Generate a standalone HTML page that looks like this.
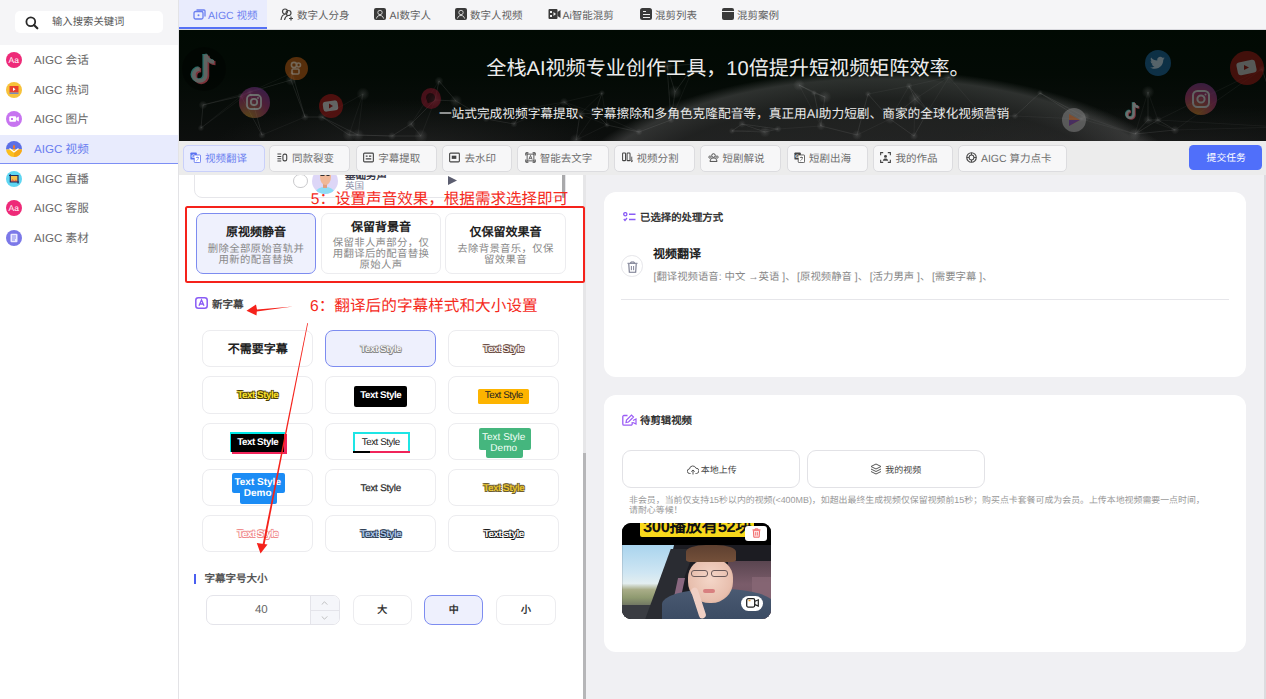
<!DOCTYPE html>
<html lang="zh-CN"><head><meta charset="utf-8">
<style>
*{box-sizing:border-box;margin:0;padding:0}
html,body{width:1266px;height:699px;overflow:hidden;background:#fff;font-family:"Liberation Sans",sans-serif;color:#333;text-rendering:geometricPrecision}
.a{position:absolute}
.nw{white-space:nowrap}
/* sidebar */
#side{left:0;top:0;width:178px;height:699px;background:#fff}
#side .srch{left:0;top:0;width:178px;height:45px;background:#f5f5f7}
#side .box{left:15px;top:11px;width:148px;height:22px;background:#fff;border-radius:5px}
.mi{left:0;width:178px;height:29px;font-size:11.6px;color:#6a6a6a}
.mi .ic{left:6.5px;top:6px;width:16px;height:16px;border-radius:50%}
.mi .t{left:34px;top:6.5px;line-height:17px}
#sideline{left:178px;top:0;width:1px;height:699px;background:#e3e3e6}
/* topnav */
#nav{left:179px;top:0;width:1087px;height:30px;background:#f5f5f7;border-bottom:1px solid #d9d9de}
.tab{top:1.8px;height:29px;font-size:10.5px;color:#606060;line-height:29px}
/* banner */
#banner{left:179px;top:30px;width:1087px;height:111px;background:#030a05;overflow:hidden}
/* toolbar */
#tool{left:179px;top:141px;width:1087px;height:34px;background:#ececec;z-index:2}
.tb{top:4.2px;height:26.6px;border:1px solid #dcdcdf;border-radius:5px;background:#f7f7f8;font-size:10.5px;color:#6e6e6e;line-height:26.5px}
/* left panel */
#lp{left:179px;top:174px;width:404px;height:525px;background:#fff;overflow:hidden}
#lscroll{left:583px;top:174px;width:3px;height:525px;background:#e6e6e8}
#lthumb{left:583px;top:453px;width:3px;height:246px;background:#b6b6b8}
/* right panel */
#rp{left:586px;top:174px;width:678px;height:525px;background:#f0f0f3}
#rscroll{left:1264px;top:174px;width:2px;height:525px;background:#dcdcdf}
.card{background:#fff;border-radius:12px}
.opt{border:1px solid #ececef;border-radius:7px;background:#fff}
.ot{left:0;width:100%;text-align:center;font-size:12px;line-height:16px;font-weight:bold;color:#222}
.od{left:0;width:100%;text-align:center;font-size:10.4px;line-height:10px;color:#888;letter-spacing:0.35px;margin-top:1.2px}
.od div{height:10.75px;white-space:nowrap}
.sc{width:111.4px;height:37.2px;border:1px solid #ececef;border-radius:8px;background:#fff;overflow:hidden}
.ts{text-align:center;font-size:9.8px;line-height:15px;font-weight:bold;letter-spacing:-0.45px}
.szb{top:421.3px;width:59.3px;height:29.6px;border:1px solid #ececef;border-radius:8px;background:#fff;text-align:center;font-size:10px;line-height:30.5px;font-weight:bold;color:#333}
.upb{top:55.2px;width:178px;height:37.6px;border:1px solid #e2e2e6;border-radius:9px;background:#fff}
</style></head><body>

<!-- SIDEBAR -->
<div id="side" class="a">
  <div class="srch a"></div>
  <div class="box a"></div>
  <svg class="a" style="left:25px;top:16px" width="14" height="14" viewBox="0 0 14 14"><circle cx="5.8" cy="5.8" r="4.4" fill="none" stroke="#2a2a2a" stroke-width="1.8"/><path d="M9 9 L12.3 12.3" stroke="#2a2a2a" stroke-width="2.2" stroke-linecap="round"/></svg>
  <div class="a nw" style="left:52px;top:16.2px;font-size:10.35px;line-height:14px;color:#555">输入搜索关键词</div>
  <div class="a" style="left:0;top:134.5px;width:178px;height:29.8px;background:#e8ebfd;border-bottom:1.5px solid #7d8ff5"></div>
  <div class="mi a" style="top:45px"><svg class="a" style="left:6.3px;top:6.8px" width="16" height="16" viewBox="0 0 16 16"><circle cx="8" cy="8" r="8" fill="#ee2a78"/><text x="2.6" y="11.3" font-size="8.5" fill="#fff" font-family="Liberation Sans">Aa</text></svg><div class="t a nw">AIGC 会话</div></div>
  <div class="mi a" style="top:75px"><svg class="a" style="left:6.3px;top:6.8px" width="16" height="16" viewBox="0 0 16 16"><circle cx="8" cy="8" r="8" fill="#f7c23a"/><rect x="3.5" y="4" width="9" height="6.5" fill="#e8402f"/><path d="M7 5.5 L9.5 7.2 L7 8.9Z" fill="#fff"/><rect x="3.5" y="10.5" width="9" height="1.5" fill="#7a8ab8"/></svg><div class="t a nw">AIGC 热词</div></div>
  <div class="mi a" style="top:104px"><svg class="a" style="left:6.3px;top:6.8px" width="16" height="16" viewBox="0 0 16 16"><circle cx="8" cy="8" r="8" fill="#c774f0"/><rect x="3.3" y="5.2" width="6.8" height="5.6" rx="1" fill="#fff"/><path d="M10.3 7 L12.8 5.5 V10.5 L10.3 9Z" fill="#fff"/><rect x="5" y="7" width="2" height="2" fill="#c774f0"/></svg><div class="t a nw">AIGC 图片</div></div>
  <div class="mi a" style="top:134px;color:#6b7ff0"><svg class="a" style="left:6.3px;top:6.8px" width="16" height="16" viewBox="0 0 16 16"><defs><clipPath id="cc"><circle cx="8" cy="8" r="8"/></clipPath></defs><g clip-path="url(#cc)"><rect x="0" y="0" width="16" height="8.5" fill="#5b6fe6"/><rect x="0" y="8.5" width="16" height="8" fill="#fbbf1e"/><rect x="8" y="8.5" width="8" height="8" fill="#f5a81a"/></g><path d="M3.5 7.5 L8 11 L12.5 7.5" fill="none" stroke="#fff" stroke-width="1.3"/><path d="M8 3.5 C9.5 5 9.5 7 8 8.5 C6.5 7 6.5 5 8 3.5Z" fill="#f57a20"/></svg><div class="t a nw">AIGC 视频</div></div>
  <div class="mi a" style="top:164px"><svg class="a" style="left:6.3px;top:6.8px" width="16" height="16" viewBox="0 0 16 16"><circle cx="8" cy="8" r="8" fill="#5ed6f2"/><rect x="4.3" y="4.5" width="7.5" height="6.5" fill="#f4c04a"/><path d="M4.3 11 L6.5 8 L8.3 10 L9.8 8.5 L11.8 11Z" fill="#e86a4a"/><path d="M3 4.5 H12 V12.5 M4.3 3.2 V11 H13" fill="none" stroke="#1f2a5a" stroke-width="1.2"/></svg><div class="t a nw">AIGC 直播</div></div>
  <div class="mi a" style="top:193px"><svg class="a" style="left:6.3px;top:6.8px" width="16" height="16" viewBox="0 0 16 16"><circle cx="8" cy="8" r="8" fill="#ee2a78"/><text x="2.6" y="11.3" font-size="8.5" fill="#fff" font-family="Liberation Sans">Aa</text></svg><div class="t a nw">AIGC 客服</div></div>
  <div class="mi a" style="top:223px"><svg class="a" style="left:6.3px;top:6.8px" width="16" height="16" viewBox="0 0 16 16"><circle cx="8" cy="8" r="8" fill="#7b78e8"/><rect x="4.5" y="3.8" width="7" height="8.4" rx="1" fill="#ecebff"/><path d="M6 6 H10 M6 8 H10 M6 10 H9" stroke="#7b78e8" stroke-width="0.9"/></svg><div class="t a nw">AIGC 素材</div></div>
</div>
<div id="sideline" class="a"></div>

<!-- NAV -->
<div id="nav" class="a">
  <div class="a" style="left:0;top:0;width:88px;height:27px;background:#e9ecfd"></div>
  <div class="a" style="left:0;top:27px;width:88px;height:2px;background:#5470f5"></div>
  <svg class="a" style="left:14px;top:8px" width="13" height="13" viewBox="0 0 13 13"><rect x="1" y="3.5" width="9" height="7.5" rx="1.5" fill="none" stroke="#6b7ff0" stroke-width="1.3"/><path d="M3.5 2 H11 a1 1 0 0 1 1 1 V8.5" fill="none" stroke="#6b7ff0" stroke-width="1.3"/><circle cx="5.5" cy="7.2" r="1" fill="#6b7ff0"/></svg>
  <div class="tab a nw" style="left:29px;color:#6b7ff0">AIGC 视频</div>
  <svg class="a" style="left:101px;top:8px" width="14" height="13" viewBox="0 0 14 13"><circle cx="5" cy="3.5" r="2.5" fill="none" stroke="#444" stroke-width="1.2"/><circle cx="8.5" cy="5" r="2.5" fill="none" stroke="#444" stroke-width="1.2"/><path d="M1 12 C1.5 8 3 6.5 5 6.5 M4.5 12 C5 9.5 6 8 8 7.5" fill="none" stroke="#444" stroke-width="1.2"/><path d="M9 10.5 H13 M11 8.5 V12.5" stroke="#444" stroke-width="1.2"/></svg>
  <div class="tab a nw" style="left:118px">数字人分身</div>
  <div class="a" style="left:195px;top:8px;width:12px;height:12px;background:#3a3a3a;border-radius:2px"></div>
  <svg class="a" style="left:195px;top:8px" width="12" height="12" viewBox="0 0 12 12"><circle cx="6" cy="4.5" r="2.2" fill="none" stroke="#ddd" stroke-width="0.9"/><path d="M2.5 10.5 C3 8 4.5 7.5 6 7.5 C7.5 7.5 9 8 9.5 10.5" fill="none" stroke="#ddd" stroke-width="0.9"/></svg>
  <div class="tab a nw" style="left:210.5px">AI数字人</div>
  <div class="a" style="left:276px;top:8px;width:12px;height:12px;background:#3a3a3a;border-radius:2px"></div>
  <svg class="a" style="left:276px;top:8px" width="12" height="12" viewBox="0 0 12 12"><circle cx="6" cy="4.5" r="2.2" fill="none" stroke="#ddd" stroke-width="0.9"/><path d="M2.5 10.5 C3 8 4.5 7.5 6 7.5 C7.5 7.5 9 8 9.5 10.5" fill="none" stroke="#ddd" stroke-width="0.9"/></svg>
  <div class="tab a nw" style="left:291px">数字人视频</div>
  <svg class="a" style="left:369px;top:8px" width="13" height="12" viewBox="0 0 13 12"><rect x="0.5" y="1" width="9" height="10" rx="1" fill="#3a3a3a"/><path d="M9.5 4 L12.5 2 V10 L9.5 8Z" fill="#3a3a3a"/><rect x="2" y="3" width="2" height="2" fill="#eee"/><rect x="2" y="7" width="2" height="2" fill="#eee"/><path d="M5.5 4 L8 6 L5.5 8Z" fill="#eee"/></svg>
  <div class="tab a nw" style="left:383.5px">Ai智能混剪</div>
  <div class="a" style="left:461px;top:8px;width:12px;height:12px;background:#3a3a3a;border-radius:2.5px"></div>
  <div class="a" style="left:463.5px;top:11px;width:3px;height:1.2px;background:#eee"></div>
  <div class="a" style="left:463.5px;top:14px;width:7px;height:1.2px;background:#eee"></div>
  <div class="a" style="left:463.5px;top:17px;width:7px;height:1.2px;background:#eee"></div>
  <div class="tab a nw" style="left:476px">混剪列表</div>
  <div class="a" style="left:543px;top:8px;width:12px;height:12px;background:#3a3a3a;border-radius:2px"></div>
  <div class="a" style="left:543px;top:10.5px;width:12px;height:1px;background:#eee"></div>
  <div class="tab a nw" style="left:558px">混剪案例</div>
</div>

<!-- BANNER -->
<div id="banner" class="a">
  <div class="a" style="left:0;top:0;width:1087px;height:111px;background:
    radial-gradient(ellipse 330px 150px at 700px 190px, rgba(58,58,58,0.55) 0%, rgba(52,52,52,0.5) 80%, rgba(95,95,95,0.45) 94%, rgba(0,0,0,0) 100%),
    radial-gradient(ellipse 200px 50px at 230px 120px, rgba(45,45,45,0.55), rgba(0,0,0,0) 100%),
    radial-gradient(ellipse 240px 50px at 1000px 125px, rgba(40,40,40,0.5), rgba(0,0,0,0) 100%),
    linear-gradient(180deg,#010a03 0%,#030a05 40%,#0d0f0e 100%)"></div>
  <svg class="a" style="left:0;top:0" width="1087" height="111" viewBox="0 0 1087 111">
    <defs><radialGradient id="gl"><stop offset="0" stop-color="rgba(200,200,200,0.16)"/><stop offset="1" stop-color="rgba(200,200,200,0)"/></radialGradient></defs>
    <path d="M346 79 L335 94 M346 79 L385 72 M346 79 L307 89 M62 66 L71 62 M62 66 L24 75 M62 66 L83 105 M586 102 L599 99 M586 102 L563 94 M586 102 L553 101 M553 101 L563 94 M553 101 L586 102 M553 101 L599 99 M22 98 L24 75 M22 98 L62 66 M22 98 L71 62 M83 105 L62 66 M83 105 L71 62 M83 105 L126 87 M460 102 L428 95 M460 102 L492 90 M460 102 L416 83 M232 94 L242 106 M232 94 L213 106 M232 94 L256 70 M689 64 L711 89 M689 64 L730 56 M689 64 L678 105 M428 95 L416 83 M428 95 L401 84 M428 95 L460 102 M1083 39 L1102 97 M1083 39 L996 100 M1083 39 L979 90 M307 89 L335 94 M307 89 L277 71 M307 89 L346 79 M143 87 L126 87 M143 87 L170 105 M143 87 L179 105 M902 89 L906 87 M902 89 L861 63 M902 89 L956 104 M184 64 L179 105 M184 64 L170 105 M184 64 L143 87 M401 84 L416 83 M401 84 L385 72 M401 84 L397 110 M599 99 L586 102 M599 99 L563 94 M599 99 L642 96 M213 106 L232 94 M213 106 L242 106 M213 106 L179 105 M749 81 L736 69 M749 81 L735 106 M749 81 L730 56 M642 96 L646 67 M642 96 L635 63 M642 96 L678 105 M492 90 L496 62 M492 90 L460 102 M492 90 L488 36 M770 47 L730 56 M770 47 L749 81 M770 47 L736 69 M256 70 L260 51 M256 70 L277 71 M256 70 L232 94 M969 90 L979 90 M969 90 L956 104 M969 90 L969 62 M804 86 L836 86 M804 86 L770 47 M804 86 L749 81 M113 43 L112 50 M113 43 L126 87 M113 43 L71 62 M836 86 L804 86 M836 86 L861 63 M836 86 L902 89 M24 75 L22 98 M24 75 L62 66 M24 75 L71 62 M735 106 L749 81 M735 106 L711 89 M735 106 L736 69 M969 62 L969 90 M969 62 L979 90 M969 62 L956 104 M335 94 L346 79 M335 94 L307 89 M335 94 L385 72 M635 63 L646 67 M635 63 L620 55 M635 63 L642 96 M496 62 L488 36 M496 62 L492 90 M496 62 L516 34 M516 34 L488 36 M516 34 L496 62 M516 34 L492 90 M730 56 L736 69 M730 56 L749 81 M730 56 L711 89 M711 89 L735 106 M711 89 L736 69 M711 89 L689 64 M1102 97 L1083 39 M1102 97 L996 100 M1102 97 L979 90 M416 83 L401 84 M416 83 L428 95 M416 83 L423 63 M736 69 L730 56 M736 69 L749 81 M736 69 L711 89 M170 105 L179 105 M170 105 L143 87 M170 105 L213 106 M112 50 L113 43 M112 50 L126 87 M112 50 L71 62 M126 87 L143 87 M126 87 L112 50 M126 87 L113 43 M260 51 L256 70 M260 51 L277 71 M260 51 L232 94 M71 62 L62 66 M71 62 L112 50 M71 62 L83 105 M488 36 L496 62 M488 36 L516 34 M488 36 L492 90 M906 87 L902 89 M906 87 L861 63 M906 87 L956 104 M956 104 L969 90 M956 104 L979 90 M956 104 L996 100 M385 72 L401 84 M385 72 L416 83 M385 72 L423 63 M979 90 L969 90 M979 90 L996 100 M979 90 L956 104 M179 105 L170 105 M179 105 L213 106 M179 105 L143 87 M242 106 L232 94 M242 106 L213 106 M242 106 L256 70 M646 67 L635 63 M646 67 L620 55 M646 67 L642 96 M277 71 L256 70 M277 71 L260 51 M277 71 L307 89 M397 110 L401 84 M397 110 L416 83 M397 110 L428 95 M620 55 L635 63 M620 55 L646 67 M620 55 L642 96 M563 94 L553 101 M563 94 L586 102 M563 94 L599 99 M678 105 L711 89 M678 105 L642 96 M678 105 L689 64 M996 100 L979 90 M996 100 L969 90 M996 100 L956 104 M861 63 L836 86 M861 63 L902 89 M861 63 L906 87 M423 63 L416 83 M423 63 L401 84 M423 63 L428 95" stroke="rgba(160,160,160,0.13)" stroke-width="0.6" fill="none"/>
    <circle cx="346" cy="79" r="4.6" fill="url(#gl)"/><circle cx="62" cy="66" r="3.4" fill="url(#gl)"/><circle cx="586" cy="102" r="5.5" fill="url(#gl)"/><circle cx="553" cy="101" r="3.2" fill="url(#gl)"/><circle cx="22" cy="98" r="3.3" fill="url(#gl)"/><circle cx="83" cy="105" r="3.8" fill="url(#gl)"/><circle cx="460" cy="102" r="3.6" fill="url(#gl)"/><circle cx="232" cy="94" r="4.4" fill="url(#gl)"/><circle cx="689" cy="64" r="3.2" fill="url(#gl)"/><circle cx="428" cy="95" r="3.0" fill="url(#gl)"/><circle cx="1083" cy="39" r="3.6" fill="url(#gl)"/><circle cx="307" cy="89" r="3.4" fill="url(#gl)"/><circle cx="143" cy="87" r="4.5" fill="url(#gl)"/><circle cx="902" cy="89" r="3.1" fill="url(#gl)"/><circle cx="184" cy="64" r="6.5" fill="url(#gl)"/><circle cx="401" cy="84" r="5.5" fill="url(#gl)"/><circle cx="599" cy="99" r="3.6" fill="url(#gl)"/><circle cx="213" cy="106" r="4.0" fill="url(#gl)"/><circle cx="749" cy="81" r="4.4" fill="url(#gl)"/><circle cx="642" cy="96" r="4.5" fill="url(#gl)"/><circle cx="492" cy="90" r="3.5" fill="url(#gl)"/><circle cx="770" cy="47" r="6.4" fill="url(#gl)"/><circle cx="256" cy="70" r="7.0" fill="url(#gl)"/><circle cx="969" cy="90" r="4.9" fill="url(#gl)"/><circle cx="804" cy="86" r="4.9" fill="url(#gl)"/><circle cx="113" cy="43" r="3.3" fill="url(#gl)"/><circle cx="836" cy="86" r="3.4" fill="url(#gl)"/><circle cx="24" cy="75" r="4.4" fill="url(#gl)"/><circle cx="735" cy="106" r="4.1" fill="url(#gl)"/><circle cx="969" cy="62" r="6.3" fill="url(#gl)"/><circle cx="335" cy="94" r="3.6" fill="url(#gl)"/><circle cx="635" cy="63" r="3.1" fill="url(#gl)"/><circle cx="496" cy="62" r="6.8" fill="url(#gl)"/><circle cx="516" cy="34" r="5.1" fill="url(#gl)"/><circle cx="730" cy="56" r="3.6" fill="url(#gl)"/><circle cx="711" cy="89" r="5.2" fill="url(#gl)"/><circle cx="1102" cy="97" r="3.1" fill="url(#gl)"/><circle cx="416" cy="83" r="5.1" fill="url(#gl)"/><circle cx="736" cy="69" r="6.9" fill="url(#gl)"/><circle cx="170" cy="105" r="6.5" fill="url(#gl)"/><circle cx="112" cy="50" r="5.8" fill="url(#gl)"/><circle cx="126" cy="87" r="4.0" fill="url(#gl)"/><circle cx="260" cy="51" r="4.5" fill="url(#gl)"/><circle cx="71" cy="62" r="3.7" fill="url(#gl)"/><circle cx="488" cy="36" r="6.1" fill="url(#gl)"/><circle cx="906" cy="87" r="5.1" fill="url(#gl)"/><circle cx="956" cy="104" r="6.1" fill="url(#gl)"/><circle cx="385" cy="72" r="4.3" fill="url(#gl)"/><circle cx="979" cy="90" r="3.9" fill="url(#gl)"/><circle cx="179" cy="105" r="6.2" fill="url(#gl)"/><circle cx="242" cy="106" r="6.9" fill="url(#gl)"/><circle cx="646" cy="67" r="6.4" fill="url(#gl)"/><circle cx="277" cy="71" r="6.2" fill="url(#gl)"/><circle cx="397" cy="110" r="6.3" fill="url(#gl)"/><circle cx="620" cy="55" r="6.0" fill="url(#gl)"/><circle cx="563" cy="94" r="3.9" fill="url(#gl)"/><circle cx="678" cy="105" r="5.1" fill="url(#gl)"/><circle cx="996" cy="100" r="4.4" fill="url(#gl)"/><circle cx="861" cy="63" r="3.1" fill="url(#gl)"/><circle cx="423" cy="63" r="3.1" fill="url(#gl)"/>
  </svg>
  <div class="a" style="left:0;top:0;width:1087px;height:111px;opacity:0.62;filter:blur(0.35px)">
  <!-- left icons -->
  <div class="a" style="left:3px;top:17px;width:44px;height:44px;border-radius:50%;background:rgba(0,0,0,0.55)"></div>
  <svg class="a" style="left:10px;top:21px" width="31" height="36" viewBox="0 0 26 30"><path d="M14 3 V20 a5 5 0 1 1 -5 -5" fill="none" stroke="#c84a5a" stroke-width="3.5" transform="translate(1.2,1)"/><path d="M14 3 C15 7 18 9 21 9" fill="none" stroke="#c84a5a" stroke-width="3.5" transform="translate(1.2,1)"/><path d="M14 3 V20 a5 5 0 1 1 -5 -5" fill="none" stroke="#3fa6a0" stroke-width="3.5" transform="translate(-1,-0.5)"/><path d="M14 3 C15 7 18 9 21 9" fill="none" stroke="#3fa6a0" stroke-width="3.5" transform="translate(-1,-0.5)"/><path d="M14 3 V20 a5 5 0 1 1 -5 -5" fill="none" stroke="#9a9a9a" stroke-width="3.2"/><path d="M14 3 C15 7 18 9 21 9" fill="none" stroke="#9a9a9a" stroke-width="3.2"/></svg>
  <div class="a" style="left:105.5px;top:26.5px;width:23px;height:23px;border-radius:50%;background:#8a4510"></div>
  <svg class="a" style="left:109px;top:30px" width="16" height="16" viewBox="0 0 16 16"><circle cx="6" cy="5" r="2.6" fill="none" stroke="#b9a08a" stroke-width="1.6"/><circle cx="10.5" cy="5" r="2" fill="none" stroke="#b9a08a" stroke-width="1.6"/><rect x="4" y="9" width="7" height="5" rx="1" fill="none" stroke="#b9a08a" stroke-width="1.6"/></svg>
  <div class="a" style="left:59.5px;top:56.5px;width:31px;height:31px;border-radius:50%;background:radial-gradient(circle at 30% 100%,#8a6a20,#7a2a55 55%,#4a2a7a)"></div>
  <svg class="a" style="left:66px;top:63px" width="18" height="18" viewBox="0 0 18 18"><rect x="2" y="2" width="14" height="14" rx="4" fill="none" stroke="#aaa" stroke-width="1.8"/><circle cx="9" cy="9" r="3.2" fill="none" stroke="#aaa" stroke-width="1.8"/><circle cx="13" cy="5" r="0.9" fill="#aaa"/></svg>
  <div class="a" style="left:139.5px;top:64px;width:24px;height:24px;border-radius:50%;background:#7a1313"></div>
  <svg class="a" style="left:142px;top:68px" width="19" height="16" viewBox="0 0 19 16"><rect x="2" y="3" width="15" height="10" rx="3" fill="#9a9a9a" transform="rotate(-8 9.5 8)"/><path d="M8 5.5 L12 8 L8 10.5Z" fill="#7a1313"/></svg>
  <div class="a" style="left:242px;top:58px;width:20px;height:21px;border-radius:50%;background:#6e1424"></div>
  <div class="a" style="left:247px;top:63px;width:9px;height:9px;border-radius:50% 50% 50% 0;background:#2a0a10;transform:rotate(-20deg)"></div>
  <!-- right icons -->
  <div class="a" style="left:965.5px;top:20px;width:26px;height:26px;border-radius:50%;background:#15486e"></div>
  <svg class="a" style="left:970px;top:25px" width="17" height="16" viewBox="0 0 24 24"><path d="M23 5 c-.8.4-1.7.6-2.6.7 1-.6 1.6-1.5 2-2.5-.9.5-1.9.9-2.9 1.1C18.6 3.3 17.4 2.8 16.1 2.8c-2.5 0-4.5 2-4.5 4.5 0 .4 0 .7.1 1C7.9 8.1 4.6 6.3 2.4 3.6c-.4.7-.6 1.4-.6 2.3 0 1.6.8 2.9 2 3.8-.7 0-1.4-.2-2-.6v.1c0 2.2 1.6 4 3.6 4.4-.4.1-.8.2-1.2.2-.3 0-.6 0-.8-.1.6 1.8 2.2 3.1 4.2 3.1-1.5 1.2-3.5 1.9-5.6 1.9-.4 0-.7 0-1.1-.1 2 1.3 4.4 2 6.9 2 8.3 0 12.8-6.9 12.8-12.8v-.6c.9-.6 1.6-1.4 2.2-2.3z" fill="#8a9aa8"/></svg>
  <div class="a" style="left:1051px;top:21px;width:34px;height:34px;border-radius:50%;background:#6a1410"></div>
  <svg class="a" style="left:1055px;top:27px" width="26" height="22" viewBox="0 0 26 22"><rect x="3" y="4" width="19" height="13" rx="3" fill="#8a8a8a" transform="rotate(-12 12.5 10.5)"/><path d="M10 8 L15 10.5 L10 13Z" fill="#6a1410"/></svg>
  <div class="a" style="left:1006px;top:52.5px;width:32px;height:32px;border-radius:50%;background:radial-gradient(circle at 35% 100%,#8a5a1a,#7a2a50 55%,#4a2a6a)"></div>
  <svg class="a" style="left:1012px;top:58.5px" width="20" height="20" viewBox="0 0 20 20"><rect x="2" y="2" width="16" height="16" rx="4.5" fill="none" stroke="#999" stroke-width="2"/><circle cx="10" cy="10" r="3.6" fill="none" stroke="#999" stroke-width="2"/><circle cx="14.5" cy="5.5" r="1" fill="#999"/></svg>
  <svg class="a" style="left:945px;top:70px" width="18" height="22" viewBox="0 0 26 30"><path d="M14 3 V20 a5 5 0 1 1 -5 -5" fill="none" stroke="#c84a5a" stroke-width="3.5" transform="translate(1.2,1)"/><path d="M14 3 C15 7 18 9 21 9" fill="none" stroke="#c84a5a" stroke-width="3.5" transform="translate(1.2,1)"/><path d="M14 3 V20 a5 5 0 1 1 -5 -5" fill="none" stroke="#3fa6a0" stroke-width="3.5" transform="translate(-1,-0.5)"/><path d="M14 3 C15 7 18 9 21 9" fill="none" stroke="#3fa6a0" stroke-width="3.5" transform="translate(-1,-0.5)"/><path d="M14 3 V20 a5 5 0 1 1 -5 -5" fill="none" stroke="#aaa" stroke-width="3.2"/><path d="M14 3 C15 7 18 9 21 9" fill="none" stroke="#aaa" stroke-width="3.2"/></svg>
  <div class="a" style="left:883px;top:78px;width:24px;height:24px;border-radius:50%;background:#777"></div>
  <svg class="a" style="left:888px;top:83px" width="14" height="14" viewBox="0 0 14 14"><path d="M2 1 L13 7 L2 13Z" fill="#b06030"/><path d="M2 7 L13 7 L2 13Z" fill="#5a3080"/></svg>
  </div>
  <!-- text -->
  <div class="a nw" style="left:0;width:1087px;top:27px;padding-left:11px;text-align:center;font-size:20.1px;line-height:24px;color:#ececec">全栈AI视频专业创作工具，10倍提升短视频矩阵效率。</div>
  <div class="a nw" style="left:0;width:1087px;top:75.5px;padding-left:3px;text-align:center;font-size:12.7px;line-height:16px;color:#eaeaea">一站式完成视频字幕提取、字幕擦除和多角色克隆配音等，真正用AI助力短剧、商家的全球化视频营销</div>
</div>

<!-- TOOLBAR -->
<div id="tool" class="a">
  <div class="tb a nw" style="left:3.6px;width:82px;background:#e9ecfd;border-color:#c9d0fa;color:#6b7ff0"><svg class="a" style="left:6.5px;top:6.3px" width="11" height="11" preserveAspectRatio="xMidYMid meet" viewBox="0 0 13 13"><rect x="0.5" y="0.5" width="7.5" height="8.5" rx="1" fill="#5a70f0"/><rect x="5" y="3.5" width="7.5" height="9" rx="1" fill="#fff" stroke="#5a70f0" stroke-width="1"/><text x="1.6" y="7.4" font-size="6" fill="#fff" font-family="Liberation Sans" font-weight="bold">G</text><path d="M7 6.5 H10.5 M8.7 5.5 V6.5 M7.5 10.5 C9 9.5 10 8 10 6.5" stroke="#5a70f0" stroke-width="0.8" fill="none"/></svg><span class="a" style="left:21.5px;top:0">视频翻译</span></div>
  <div class="tb a nw" style="left:90.4px;width:81.1px"><svg class="a" style="left:6.5px;top:6.3px" width="11" height="11" preserveAspectRatio="xMidYMid meet" viewBox="0 0 13 10"><path d="M0.5 1 H5 M0.5 3.7 H5 M0.5 6.4 H5 M0.5 9 H5" stroke="#444" stroke-width="1.2"/><rect x="7" y="1" width="4.5" height="8" rx="2" fill="none" stroke="#444" stroke-width="1.3"/></svg><span class="a" style="left:21.5px;top:0">同款裂变</span></div>
  <div class="tb a nw" style="left:176.7px;width:81px"><svg class="a" style="left:6.5px;top:6.3px" width="11" height="11" preserveAspectRatio="xMidYMid meet" viewBox="0 0 12 11"><rect x="0.7" y="0.7" width="10.6" height="9.6" rx="1" fill="none" stroke="#444" stroke-width="1.2"/><path d="M3 4 H5 M3 7 H9 M6.5 4 H9" stroke="#444" stroke-width="1.2"/></svg><span class="a" style="left:21.5px;top:0">字幕提取</span></div>
  <div class="tb a nw" style="left:262.9px;width:70.1px"><svg class="a" style="left:6.5px;top:6.3px" width="11" height="11" preserveAspectRatio="xMidYMid meet" viewBox="0 0 12 11"><rect x="0.7" y="0.7" width="10.6" height="9.6" rx="1" fill="none" stroke="#444" stroke-width="1.2"/><rect x="3" y="3.5" width="5" height="3.5" fill="#444"/></svg><span class="a" style="left:21.5px;top:0">去水印</span></div>
  <div class="tb a nw" style="left:338.2px;width:91.8px"><svg class="a" style="left:6.5px;top:6.3px" width="11" height="11" preserveAspectRatio="xMidYMid meet" viewBox="0 0 13 13"><path d="M1 1 H4 M1 1 V4 M12 1 H9 M12 1 V4 M1 12 H4 M1 12 V9 M12 12 H9 M12 12 V9" stroke="#444" stroke-width="1.3" fill="none"/><rect x="2.5" y="2.5" width="8" height="8" fill="none" stroke="#444" stroke-width="1"/><path d="M4.5 9 L6.5 4 L8.5 9 M5.2 7.5 H7.8" stroke="#444" stroke-width="0.9" fill="none"/></svg><span class="a" style="left:21.5px;top:0">智能去文字</span></div>
  <div class="tb a nw" style="left:435px;width:81px"><svg class="a" style="left:6.5px;top:6.3px" width="11" height="11" preserveAspectRatio="xMidYMid meet" viewBox="0 0 13 12"><rect x="0.7" y="0.7" width="3.5" height="9" rx="0.8" fill="none" stroke="#444" stroke-width="1.2"/><rect x="6" y="0.7" width="3.5" height="9" rx="0.8" fill="none" stroke="#444" stroke-width="1.2"/><path d="M11.5 5 V11 M10 9.5 L11.5 11 L13 9.5" stroke="#444" stroke-width="1" fill="none"/></svg><span class="a" style="left:21.5px;top:0">视频分割</span></div>
  <div class="tb a nw" style="left:521px;width:81px"><svg class="a" style="left:6.5px;top:6.3px" width="11" height="11" preserveAspectRatio="xMidYMid meet" viewBox="0 0 14 11"><circle cx="7" cy="3" r="2.3" fill="none" stroke="#444" stroke-width="1.2"/><path d="M2.5 10.5 C3 7 5 6.2 7 6.2 C9 6.2 11 7 11.5 10.5Z" fill="none" stroke="#444" stroke-width="1.2"/><circle cx="2.5" cy="5" r="1.5" fill="none" stroke="#444" stroke-width="1"/><circle cx="11.5" cy="5" r="1.5" fill="none" stroke="#444" stroke-width="1"/></svg><span class="a" style="left:21.5px;top:0">短剧解说</span></div>
  <div class="tb a nw" style="left:607.5px;width:81px"><svg class="a" style="left:6.5px;top:6.3px" width="11" height="11" preserveAspectRatio="xMidYMid meet" viewBox="0 0 13 13"><rect x="0.5" y="0.5" width="7.5" height="8.5" rx="1" fill="#444"/><rect x="5" y="3.5" width="7.5" height="9" rx="1" fill="#fff" stroke="#444" stroke-width="1"/><text x="1.6" y="7.4" font-size="6" fill="#fff" font-family="Liberation Sans" font-weight="bold">G</text><path d="M7 6.5 H10.5 M8.7 5.5 V6.5 M7.5 10.5 C9 9.5 10 8 10 6.5" stroke="#444" stroke-width="0.8" fill="none"/></svg><span class="a" style="left:21.5px;top:0">短剧出海</span></div>
  <div class="tb a nw" style="left:693.9px;width:80px"><svg class="a" style="left:6.5px;top:6.3px" width="11" height="11" preserveAspectRatio="xMidYMid meet" viewBox="0 0 12 12"><path d="M0.7 3.5 V0.7 H3.5 M8.5 0.7 H11.3 V3.5 M11.3 8.5 V11.3 H8.5 M3.5 11.3 H0.7 V8.5" stroke="#444" stroke-width="1.2" fill="none"/><circle cx="6" cy="4.8" r="1.6" fill="#444"/><path d="M3 9.5 C3.5 7.5 4.5 7 6 7 C7.5 7 8.5 7.5 9 9.5Z" fill="#444"/></svg><span class="a" style="left:21.5px;top:0">我的作品</span></div>
  <div class="tb a nw" style="left:779.4px;width:108.3px"><svg class="a" style="left:6.5px;top:6.3px" width="11" height="11" preserveAspectRatio="xMidYMid meet" viewBox="0 0 12 12"><circle cx="6" cy="6" r="5.2" fill="none" stroke="#444" stroke-width="1.2"/><circle cx="6" cy="6" r="2.6" fill="none" stroke="#444" stroke-width="1.1"/><path d="M6 1 V3.3 M6 8.7 V11 M1 6 H3.3 M8.7 6 H11" stroke="#444" stroke-width="1"/></svg><span class="a" style="left:21.5px;top:0">AIGC 算力点卡</span></div>
  <div class="a nw" style="left:1010.3px;top:4.2px;width:72.8px;height:24.8px;background:#506ffa;border-radius:4.5px;color:#fff;font-size:9.8px;line-height:28.5px;text-align:center;padding-left:1px">提交任务</div>
</div>

<!-- LEFT PANEL -->
<div id="lp" class="a">
  <!-- voice card (clipped) -->
  <div class="a" style="left:15px;top:-40px;width:372px;height:64px;border:1px solid #e6e6ea;border-radius:8px"></div>
  <div class="a" style="left:383px;top:0;width:2.5px;height:24px;background:#a9a9ab;border-radius:1px"></div>
  <div class="a" style="left:114.19999999999999px;top:-0.19999999999998863px;width:14.5px;height:14.5px;border:1px solid #c9c9cc;border-radius:50%"></div>
  <div class="a" style="left:133px;top:-6px;width:26px;height:26px;border-radius:50%;background:#ddd6f7;overflow:hidden">
    <div class="a" style="left:4px;top:19px;width:18px;height:10px;border-radius:50% 50% 0 0;background:#8fdcf5"></div>
    <div class="a" style="left:11px;top:15px;width:4px;height:5px;background:#e0a080"></div>
    <div class="a" style="left:7.5px;top:1px;width:11px;height:16px;border-radius:45% 45% 50% 50%;background:#f0b898"></div>
    <div class="a" style="left:8px;top:5px;width:4.5px;height:3px;border:0.8px solid #333;border-radius:1px"></div>
    <div class="a" style="left:13.5px;top:5px;width:4.5px;height:3px;border:0.8px solid #333;border-radius:1px"></div>
  </div>
  <div class="a nw" style="left:166px;top:-3.8px;font-size:10.5px;line-height:13px;color:#3a3a4a;font-weight:bold">基础男声</div>
  <div class="a nw" style="left:166px;top:8px;font-size:9.5px;line-height:10px;color:#8c90a8">英国</div>
  <svg class="a" style="left:269px;top:2px" width="9" height="9" viewBox="0 0 9 9"><path d="M0 0 L9 4.5 L0 9Z" fill="#5c5e70"/></svg>
  <div class="a nw" style="left:131.8px;top:16.3px;font-size:15.55px;line-height:20px;color:#f52a1c">5：设置声音效果，根据需求选择即可</div>

  <div class="opt a" style="left:17px;top:39px;width:120px;height:61px;background:#eff1fd;border:1px solid #7d8cf0">
    <div class="ot a nw" style="top:10px">原视频静音</div>
    <div class="od a" style="top:30px"><div>删除全部原始音轨并</div><div>用新的配音替换</div></div>
  </div>
  <div class="opt a" style="left:142px;top:39px;width:120px;height:61px">
    <div class="ot a nw" style="top:5px">保留背景音</div>
    <div class="od a" style="top:24px"><div>保留非人声部分，仅</div><div>用翻译后的配音替换</div><div>原始人声</div></div>
  </div>
  <div class="opt a" style="left:266px;top:39px;width:121px;height:61px">
    <div class="ot a nw" style="top:10px">仅保留效果音</div>
    <div class="od a" style="top:30px"><div>去除背景音乐，仅保</div><div>留效果音</div></div>
  </div>

  <!-- subtitle header -->
  <svg class="a" style="left:15.5px;top:123px" width="13" height="12" viewBox="0 0 13 12"><rect x="0.8" y="0.8" width="11.4" height="10.4" rx="2.5" fill="none" stroke="#8a5cf5" stroke-width="1.5"/><path d="M4 8.8 L6.5 3 L9 8.8 M4.9 7 H8.1" stroke="#8a5cf5" stroke-width="1.3" fill="none"/></svg>
  <div class="a nw" style="left:33px;top:124.5px;font-size:10.5px;line-height:13px;color:#444;font-weight:bold">新字幕</div>
  <div class="a nw" style="left:131px;top:122.6px;font-size:15.65px;line-height:20px;color:#f52a1c">6：翻译后的字幕样式和大小设置</div>
  <div class="sc a" style="left:23.0px;top:156.2px;"><div class="a nw" style="left:0;width:100%;top:11px;text-align:center;font-size:12px;line-height:15px;font-weight:bold;color:#222">不需要字幕</div></div>
  <div class="sc a" style="left:146.0px;top:156.2px;background:#eef0fd;border-color:#7d8cf0"><div class="a nw ts" style="left:0;width:100%;top:11px;color:#f2f2f2;text-shadow:0 0 1px #777,0.5px 0.5px 0 #888,-0.5px -0.5px 0 #888,0.5px -0.5px 0 #888,-0.5px 0.5px 0 #888">Text Style</div></div>
  <div class="sc a" style="left:269.0px;top:156.2px;"><div class="a nw ts" style="left:0;width:100%;top:11px;color:#f6f0ee;text-shadow:0.6px 0.6px 0 #6a4a40,-0.6px -0.6px 0 #6a4a40,0.6px -0.6px 0 #6a4a40,-0.6px 0.6px 0 #6a4a40">Text Style</div></div>
  <div class="sc a" style="left:23.0px;top:202.4px;"><div class="a nw ts" style="left:0;width:100%;top:11px;color:#f7e02a;text-shadow:0.7px 0.7px 0 #4a3a00,-0.7px -0.7px 0 #4a3a00,0.7px -0.7px 0 #4a3a00,-0.7px 0.7px 0 #4a3a00">Text Style</div></div>
  <div class="sc a" style="left:146.0px;top:202.4px;"><div class="a" style="left:27.5px;top:9px;width:53px;height:21px;background:#000;border-radius:2px"></div><div class="a nw ts" style="left:0;width:100%;top:11px;color:#fff">Text Style</div></div>
  <div class="sc a" style="left:269.0px;top:202.4px;"><div class="a" style="left:28.5px;top:11.5px;width:51px;height:15.5px;background:#fdb400;border-radius:1.5px"></div><div class="a nw ts" style="left:0;width:100%;top:11px;color:#222;font-weight:normal">Text Style</div></div>
  <div class="sc a" style="left:23.0px;top:248.7px;"><div class="a" style="left:26.5px;top:8.5px;width:55px;height:20px;background:#00e8e8"></div><div class="a" style="left:28.5px;top:10.5px;width:55px;height:20px;background:#f0245a"></div><div class="a" style="left:28px;top:10px;width:53px;height:18px;background:#000"></div><div class="a nw ts" style="left:0;width:100%;top:11px;color:#fff">Text Style</div></div>
  <div class="sc a" style="left:146.0px;top:248.7px;"><div class="a" style="left:26.5px;top:8.5px;width:57px;height:20.5px;border:2px solid #1ee5e5;border-bottom:none;background:#fff"></div><div class="a" style="left:26.5px;top:27px;width:17px;height:2.5px;background:#000"></div><div class="a" style="left:43.5px;top:27px;width:40px;height:2.5px;background:#f0245a"></div><div class="a nw ts" style="left:0;width:100%;top:11px;color:#222;font-weight:normal">Text Style</div></div>
  <div class="sc a" style="left:269.0px;top:248.7px;"><div class="a" style="left:29.5px;top:4px;width:52px;height:22px;background:#45b67e;border-radius:2px"></div><div class="a" style="left:37px;top:21px;width:37px;height:13.5px;background:#45b67e;border-radius:2px"></div><div class="a nw" style="left:0;width:100%;top:8px;text-align:center;font-size:10px;line-height:11.5px;color:#f4fff8">Text Style<br>Demo</div></div>
  <div class="sc a" style="left:23.0px;top:294.9px;"><div class="a" style="left:28.5px;top:3px;width:53px;height:20px;background:#1b8cf5;border-radius:2px"></div><div class="a" style="left:36.5px;top:18px;width:37px;height:16px;background:#1b8cf5;border-radius:2px"></div><div class="a nw" style="left:0;width:100%;top:7px;text-align:center;font-size:10px;line-height:11.5px;color:#fff;font-weight:bold">Text Style<br>Demo</div></div>
  <div class="sc a" style="left:146.0px;top:294.9px;"><div class="a nw ts" style="left:0;width:100%;top:11px;color:#2e2e2e;font-weight:normal;letter-spacing:-0.2px;-webkit-text-stroke:0.25px #2e2e2e">Text Style</div></div>
  <div class="sc a" style="left:269.0px;top:294.9px;"><div class="a nw ts" style="left:0;width:100%;top:11px;color:#e6c22a;text-shadow:0.7px 0.7px 0 #6a5a30,-0.7px -0.7px 0 #6a5a30,0.7px -0.7px 0 #6a5a30,-0.7px 0.7px 0 #6a5a30">Text Style</div></div>
  <div class="sc a" style="left:23.0px;top:341.1px;"><div class="a nw ts" style="left:0;width:100%;top:11px;color:#fff;text-shadow:0.6px 0.6px 0 #f08a8a,-0.6px -0.6px 0 #f08a8a,0.6px -0.6px 0 #f08a8a,-0.6px 0.6px 0 #f08a8a">Text Style</div></div>
  <div class="sc a" style="left:146.0px;top:341.1px;"><div class="a nw ts" style="left:0;width:100%;top:11px;color:#a9c4e6;text-shadow:0.7px 0.7px 0 #2a3a50,-0.7px -0.7px 0 #2a3a50,0.7px -0.7px 0 #2a3a50,-0.7px 0.7px 0 #2a3a50">Text Style</div></div>
  <div class="sc a" style="left:269.0px;top:341.1px;"><div class="a nw ts" style="left:0;width:100%;top:11px;color:#fff;text-shadow:0.7px 0.7px 0 #111,-0.7px -0.7px 0 #111,0.7px -0.7px 0 #111,-0.7px 0.7px 0 #111">Text style</div></div>
  <!-- font size -->
  <div class="a" style="left:14.699999999999989px;top:400.20000000000005px;width:2.3px;height:10.3px;background:#4a5ff0"></div>
  <div class="a nw" style="left:25.5px;top:399.3px;font-size:10.5px;line-height:13px;color:#555;font-weight:bold">字幕字号大小</div>
  <div class="a" style="left:27.30000000000001px;top:421px;width:133.5px;height:30px;border:1px solid #e4e4ea;border-radius:7px;overflow:hidden">
    <div class="a" style="left:102.5px;top:0;width:31px;height:30px;background:#f5f6fa;border-left:1px solid #e4e4ea"></div>
    <div class="a" style="left:102.5px;top:13.7px;width:31px;height:1px;background:#e4e4ea"></div>
    <svg class="a" style="left:114px;top:5px" width="7" height="4" viewBox="0 0 8 5"><path d="M0.5 4.5 L4 1 L7.5 4.5" fill="none" stroke="#aaa" stroke-width="0.9"/></svg>
    <svg class="a" style="left:114px;top:19.5px" width="7" height="4" viewBox="0 0 8 5"><path d="M0.5 0.5 L4 4 L7.5 0.5" fill="none" stroke="#aaa" stroke-width="0.9"/></svg>
    <div class="a nw" style="left:3px;width:102px;top:7px;text-align:center;font-size:11.5px;line-height:15px;color:#666">40</div>
  </div>
  <div class="szb a" style="left:173.7px">大</div>
  <div class="szb a" style="left:245.2px;background:#eef0fd;border-color:#7d8cf0">中</div>
  <div class="szb a" style="left:317.4px">小</div>
</div>
<div id="lscroll" class="a"></div>
<div id="lthumb" class="a"></div>
<div class="a" style="left:185px;top:205.8px;width:400.2px;height:76.8px;border:2.6px solid #f5221b;border-radius:2.5px"></div>

<!-- RIGHT PANEL -->
<div id="rp" class="a"></div>
<div id="rscroll" class="a"></div>
<div class="card a" style="left:604px;top:192px;width:642px;height:185px">
  <svg class="a" style="left:19px;top:20px" width="13" height="10" viewBox="0 0 13 10"><circle cx="2.3" cy="2.2" r="1.6" fill="none" stroke="#8a5cf5" stroke-width="1.3"/><path d="M0.8 7 L2 8.5 L4 6" fill="none" stroke="#8a5cf5" stroke-width="1.3"/><path d="M6 2.2 H12.5 M6 7.5 H12.5" stroke="#8a5cf5" stroke-width="1.5"/></svg>
  <div class="a nw" style="left:36px;top:20.5px;font-size:10.4px;line-height:12px;color:#333;font-weight:bold">已选择的处理方式</div>
  <div class="a" style="left:17px;top:63px;width:21.5px;height:21.5px;border:1px solid #e6e6ea;border-radius:50%"></div>
  <svg class="a" style="left:22.5px;top:69px" width="11" height="12" viewBox="0 0 11 12"><path d="M0.5 2.3 H10.5 M3.8 2.3 V1 H7.2 V2.3" fill="none" stroke="#74778c" stroke-width="1"/><path d="M1.8 3 L2.3 11.2 H8.7 L9.2 3" fill="none" stroke="#74778c" stroke-width="1.1"/><path d="M4.4 5 V9.2 M6.6 5 V9.2" stroke="#74778c" stroke-width="0.9"/></svg>
  <div class="a nw" style="left:49px;top:55px;font-size:12px;line-height:15px;color:#222;font-weight:bold">视频翻译</div>
  <div class="a nw" style="left:49.5px;top:79px;font-size:10.4px;line-height:13px;color:#888">[翻译视频语音: 中文 →英语 ]<span style="margin-right:1.6px">、</span>[原视频静音 ]<span style="margin-right:1.6px">、</span>[活力男声 ]<span style="margin-right:1.6px">、</span>[需要字幕 ]、</div>
  <div class="a" style="left:17px;top:107px;width:608px;height:1px;background:#e6e6ea"></div>
</div>
<div class="card a" style="left:604px;top:395px;width:642px;height:257px">
  <svg class="a" style="left:18px;top:19px" width="15" height="12" viewBox="0 0 15 12"><path d="M5.5 1.5 H2 a1.2 1.2 0 0 0 -1.2 1.2 V10 a1.2 1.2 0 0 0 1.2 1.2 H9 a1.2 1.2 0 0 0 1.2 -1.2 V8" fill="none" stroke="#9b5cf5" stroke-width="1.3"/><path d="M4 8.5 L4.5 6 L9.5 1 L11.5 3 L6.5 8Z" fill="none" stroke="#9b5cf5" stroke-width="1.2"/><path d="M11 6.5 L14 5 V10 L11 8.5" fill="none" stroke="#9b5cf5" stroke-width="1.2"/></svg>
  <div class="a nw" style="left:36px;top:21px;font-size:10.4px;line-height:12px;color:#333;font-weight:bold">待剪辑视频</div>
  <div class="upb a" style="left:17.7px">
    <svg class="a" style="left:64px;top:14px" width="12" height="10" viewBox="0 0 12 10"><path d="M3.5 8.5 H2.8 a2.3 2.3 0 0 1 -0.3 -4.6 a3.3 3.3 0 0 1 6.4 -0.7 a2.6 2.6 0 0 1 0.6 5.3 H8.5" fill="none" stroke="#555" stroke-width="1"/><path d="M6 9.5 V5 M4.3 6.6 L6 5 L7.7 6.6" fill="none" stroke="#555" stroke-width="1"/></svg>
    <div class="a nw" style="left:78px;top:12.5px;font-size:9px;line-height:13px;color:#444">本地上传</div>
  </div>
  <div class="upb a" style="left:203.2px">
    <svg class="a" style="left:62px;top:12px" width="12" height="12" viewBox="0 0 12 12"><path d="M6 1 L11 3.5 L6 6 L1 3.5Z" fill="none" stroke="#555" stroke-width="1"/><path d="M1 6 L6 8.5 L11 6 M1 8.5 L6 11 L11 8.5" fill="none" stroke="#555" stroke-width="1"/></svg>
    <div class="a nw" style="left:77px;top:13px;font-size:9px;line-height:13px;color:#444">我的视频</div>
  </div>
  <div class="a" style="left:25px;top:99.5px;width:620px;font-size:8.92px;line-height:10px;color:#999">非会员，当前仅支持15秒以内的视频(&lt;400MB)，如超出最终生成视频仅保留视频前15秒；购买点卡套餐可成为会员。上传本地视频需要一点时间，<br>请耐心等候！</div>
  <div class="a" style="left:18.1px;top:127.9px;width:148.9px;height:95.8px;border-radius:9px;overflow:hidden;background:#111">
    <!-- scene -->
    <div class="a" style="left:0;top:20px;width:149px;height:76px;background:#1c1c22"></div>
    <div class="a" style="left:0;top:22px;width:52px;height:62px;background:linear-gradient(180deg,#a9d4ee 0%,#cfe6f3 45%,#e3eef0 62%,#a9ad88 72%,#8f9a70 85%,#6a6e60 100%);clip-path:polygon(0 0,100% 0,70% 100%,0 100%)"></div>
    <div class="a" style="left:0;top:82px;width:40px;height:14px;background:#3a3c42"></div>
    <div class="a" style="left:36px;top:26px;width:24px;height:70px;background:#2a2c32;transform:skewX(-20deg)"></div>
    <div class="a" style="left:52px;top:55px;width:7px;height:38px;background:#8a6880;transform:skewX(-12deg)"></div>
    <div class="a" style="left:106px;top:38px;width:43px;height:58px;background:linear-gradient(180deg,#5a4550 0%,#7a5c6a 40%,#6a5060 100%)"></div>
    <div class="a" style="left:130px;top:54px;width:19px;height:42px;background:#8a6a78;opacity:.7"></div>
    <div class="a" style="left:40px;top:66px;width:112px;height:34px;background:linear-gradient(180deg,#4a5a72,#3a4a62);border-radius:45% 45% 0 0"></div>
    <div class="a" style="left:66px;top:36px;width:45px;height:44px;background:radial-gradient(ellipse at 50% 45%,#f4d6c8 0%,#e8bfae 65%,#c9977f 100%);border-radius:42% 42% 48% 48%"></div>
    <div class="a" style="left:64px;top:22px;width:50px;height:17px;background:linear-gradient(180deg,#5e4030,#74503a);border-radius:40% 40% 12% 12%"></div>
    <div class="a" style="left:69px;top:47px;width:17px;height:7px;border:1px solid #6a5a5a;border-radius:3px"></div>
    <div class="a" style="left:89px;top:47px;width:17px;height:7px;border:1px solid #6a5a5a;border-radius:3px"></div>
    <div class="a" style="left:81px;top:66px;width:12px;height:4px;background:#d88080;border-radius:2px"></div>
    <div class="a" style="left:73px;top:64px;width:7px;height:32px;background:#f0cfc4;border-radius:4px;transform:rotate(-18deg)"></div>
    <div class="a" style="left:0;top:0;width:149px;height:22px;background:#000"></div>
    <div class="a" style="left:18px;top:0;width:113.5px;height:14.5px;background:#f8d81c;border-radius:0 0 2px 2px"></div>
    <div class="a nw" style="left:21px;top:-4.5px;font-size:16.5px;line-height:18px;font-weight:bold;color:#111;letter-spacing:-0.4px">300播放有52块</div>
    <div class="a" style="left:123px;top:3px;width:22px;height:15px;background:#fff;border-radius:3px"></div>
    <svg class="a" style="left:129.5px;top:5.5px" width="9" height="10" viewBox="0 0 10 11"><path d="M0.5 2 H9.5 M3.5 2 V0.8 H6.5 V2" fill="none" stroke="#f26a6a" stroke-width="1"/><path d="M1.5 2.5 L2 10.2 H8 L8.5 2.5Z" fill="#fde0e0" stroke="#f26a6a" stroke-width="1.1"/><path d="M4 4.5 V8.3 M6 4.5 V8.3" stroke="#f26a6a" stroke-width="0.9"/></svg>
    <div class="a" style="left:118.7px;top:73px;width:22.3px;height:15px;background:#fff;border-radius:7.5px"></div>
    <svg class="a" style="left:124px;top:75.5px" width="13" height="10" viewBox="0 0 13 10"><rect x="0.7" y="0.7" width="8" height="8.4" rx="1.5" fill="none" stroke="#222" stroke-width="1.3"/><path d="M9 3.2 L12.3 1.8 V8 L9 6.6" fill="none" stroke="#222" stroke-width="1.2"/><path d="M2.5 2.5 H4.5" stroke="#e8a030" stroke-width="1.5"/></svg>
  </div>
</div>


<svg class="a" style="left:0;top:0" width="1266" height="699" viewBox="0 0 1266 699">
  <path d="M293 306.5 L257 309.5 L256 304.5 L246.5 310.7 L256.5 315.5 L256.8 311.5 Z" fill="#f5221b"/>
  <path d="M307.3 323 L308 323.2 L264.5 545 L262.5 545 Z" fill="#f5221b"/>
  <path d="M256.8 543 L260.5 553.5 L267.5 544.5 Z" fill="#f5221b"/>
</svg>
</body></html>
